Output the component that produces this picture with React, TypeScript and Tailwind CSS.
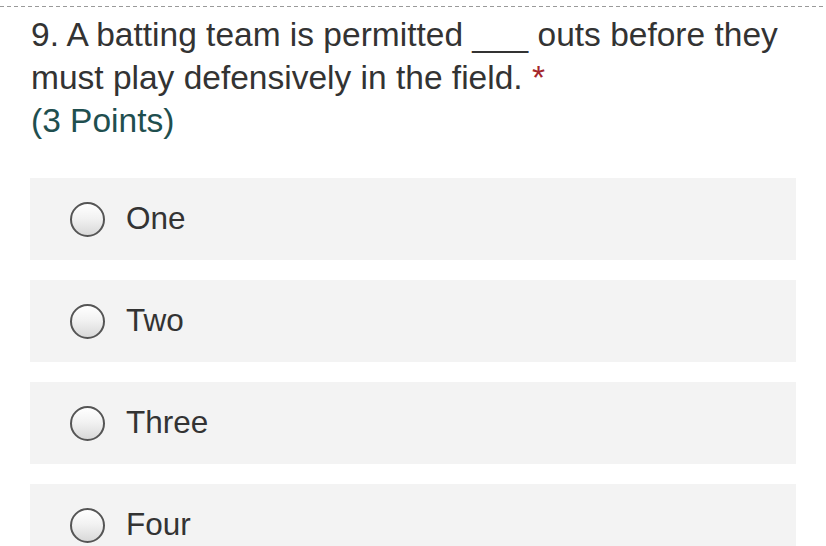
import React from "react";

const options = ["One", "Two", "Three", "Four"];

function Radio() {
  return (
    <span className="w-[35px] h-[35px] rounded-full border-[2px] border-[#555555] bg-[linear-gradient(180deg,#ffffff_0%,#f2f2f2_45%,#d9d9d9_100%)] shrink-0" />
  );
}

export default function App() {
  return (
    <div
      className="w-[826px] h-[546px] bg-white overflow-hidden"
      style={{ fontFamily: '"Liberation Sans", Arial, sans-serif' }}
    >
      <div className="pt-[6px]">
        <div className="h-px w-full bg-[repeating-linear-gradient(90deg,#9a9a9a_0px,#9a9a9a_4px,transparent_4px,transparent_7px)]" />
      </div>
      <div className="px-[30px]">
        <div className="mt-[6px] pl-[1px] text-[33.5px] leading-[43px] text-[#333333]">
          9. A batting team is permitted ___ outs before they must play defensively in the field.{" "}
          <span className="text-[#a4262c]">*</span>
          <div className="text-[#1f4f4f]">(3 Points)</div>
        </div>
        <div className="mt-[36px] flex flex-col gap-[20px]">
          {options.map((o) => (
            <div
              key={o}
              className="h-[82px] bg-[#f3f3f3] flex items-center pl-[40px] gap-[21px]"
            >
              <Radio />
              <span className="text-[31.5px] text-[#333333] leading-none">{o}</span>
            </div>
          ))}
        </div>
      </div>
    </div>
  );
}
